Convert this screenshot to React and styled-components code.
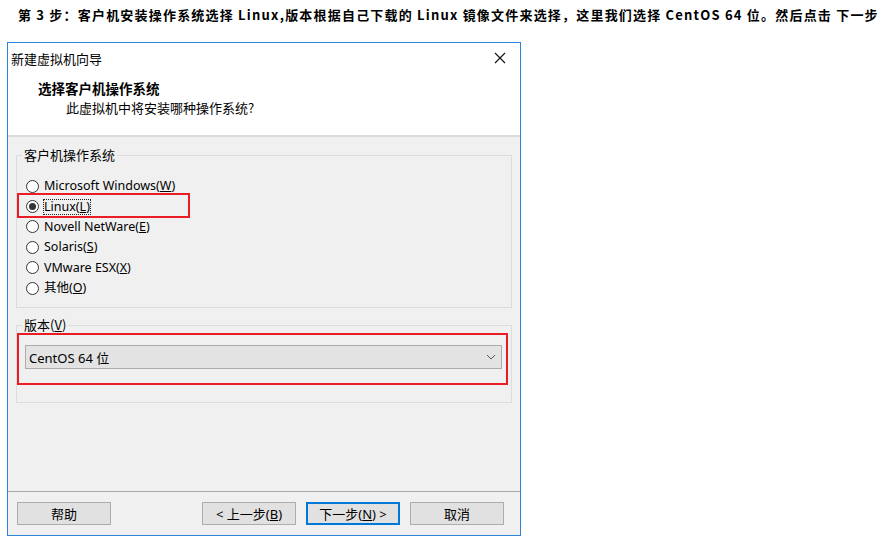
import React from "react";
import styled, { createGlobalStyle } from "styled-components";

const GlobalStyle = createGlobalStyle`
  html, body {
    margin: 0;
    padding: 0;
    background: #ffffff;
  }
  body {
    font-family: "Noto Sans", "Noto Sans CJK SC", sans-serif;
    color: #000;
  }
`;

const Page = styled.div`
  width: 890px;
  height: 550px;
  overflow: hidden;
`;

const Caption = styled.p`
  margin: 0;
  padding: 6px 0 0 18px;
  font-family: "Noto Sans CJK SC", sans-serif;
  font-weight: bold;
  font-size: 13px;
  line-height: 18px;
  letter-spacing: 1.2px;
  white-space: nowrap;
`;

const Window = styled.div`
  margin: 18px 0 0 7px;
  width: 514px;
  height: 494px;
  box-sizing: border-box;
  border: 1px solid #2b86d9;
  background: #f0f0f0;
  display: flex;
  flex-direction: column;
  font-family: "Noto Sans", "Noto Sans CJK SC", sans-serif;
  font-size: 12.5px;
`;

const Header = styled.div`
  background: #fff;
  border-bottom: 2px solid #dadada;
  padding-bottom: 17px;
`;

const TitleBar = styled.div`
  height: 30px;
  display: flex;
  align-items: center;
  justify-content: space-between;
  padding: 0 14px 0 3px;
  margin-bottom: 5px;
  font-family: "Noto Sans CJK SC", sans-serif;
  font-size: 13px;
`;

const Heading = styled.div`
  padding-left: 30px;
  font-family: "Noto Sans CJK SC", sans-serif;
  font-weight: bold;
  font-size: 13.5px;
  line-height: 20px;
`;

const Subtitle = styled.div`
  padding-left: 58px;
  font-family: "Noto Sans CJK SC", sans-serif;
  font-size: 13px;
  line-height: 20px;
`;

const Body = styled.div`
  flex: 1;
  padding: 9px 8px 0 8px;
  display: flex;
  flex-direction: column;
  gap: 10px;
`;

const Group = styled.fieldset`
  margin: 0;
  border: 1px solid #dcdcdc;
  padding: 0 0 ${(p) => p.$bottom}px 0;
  min-width: 0;
`;

const Legend = styled.legend`
  margin-left: 5px;
  padding: 0 2px;
  font-size: 13px;
  line-height: ${(p) => p.$lh || 18}px;
  font-family: "Noto Sans CJK SC", sans-serif;
`;

const RadioList = styled.div`
  padding: 12px 0 0 9px;
`;

const RadioRow = styled.div`
  position: relative;
  height: 20.4px;
  display: flex;
  align-items: center;
  gap: 4px;

  ${(p) =>
    p.$marked &&
    `
    &::after {
      content: "";
      position: absolute;
      left: -9px;
      top: -3px;
      width: 173px;
      height: 25px;
      box-sizing: border-box;
      border: 2px solid #ec1c24;
    }
  `}
`;

const Circle = styled.span`
  width: 13px;
  height: 13px;
  box-sizing: border-box;
  border-radius: 50%;
  border: 1px solid #333;
  background: #fff;
  display: flex;
  align-items: center;
  justify-content: center;

  &::before {
    content: "";
    width: 7px;
    height: 7px;
    border-radius: 50%;
    background: ${(p) => (p.$checked ? "#333" : "transparent")};
  }
`;

const RadioLabel = styled.span`
  line-height: 16px;
  padding: 0 1px;
  outline: ${(p) => (p.$focus ? "1px dotted #222" : "none")};
  outline-offset: -1px;
  white-space: nowrap;
`;

const Marked = styled.div`
  margin-top: 1px;
  width: 491px;
  box-sizing: border-box;
  border: 2px solid #ec1c24;
  padding: 10px 4px 14px 6px;
`;

const Select = styled.div`
  height: 24px;
  box-sizing: border-box;
  border: 1px solid #adadad;
  background: #e3e3e3;
  display: flex;
  align-items: center;
  justify-content: space-between;
  padding: 0 5px 0 3px;
  font-size: 13px;
`;

const Footer = styled.div`
  border-top: 1px solid #a9a9a9;
  padding: 10px 16px 10px 9px;
  display: flex;
  align-items: center;
`;

const Button = styled.div`
  width: 94px;
  height: 23px;
  box-sizing: border-box;
  border: 1px solid ${(p) => (p.$default ? "#0078d7" : "#adadad")};
  box-shadow: ${(p) => (p.$default ? "inset 0 0 0 1px #0078d7" : "none")};
  background: #e1e1e1;
  display: flex;
  align-items: center;
  justify-content: center;
  font-size: 13px;
  font-family: "Noto Sans", "Noto Sans CJK SC", sans-serif;
  white-space: nowrap;
  margin-left: ${(p) => p.$ml || 0}px;
`;

const Spacer = styled.div`
  flex: 1;
`;

const CloseIcon = () => (
  <svg width="12" height="12" viewBox="0 0 12 12">
    <path d="M1 1 L11 11 M11 1 L1 11" stroke="#111" strokeWidth="1.1" />
  </svg>
);

const Chevron = () => (
  <svg width="10" height="6" viewBox="0 0 10 6">
    <path d="M1 1 L5 5 L9 1" fill="none" stroke="#555" strokeWidth="1" />
  </svg>
);

const options = [
  { text: "Microsoft Windows(", key: "W" },
  { text: "Linux(", key: "L", checked: true },
  { text: "Novell NetWare(", key: "E" },
  { text: "Solaris(", key: "S" },
  { text: "VMware ESX(", key: "X" },
  { text: "其他(", key: "O" },
];

export default function App() {
  return (
    <Page>
      <GlobalStyle />
      <Caption>
        第 3 步：客户机安装操作系统选择 Linux,版本根据自己下载的 Linux
        镜像文件来选择，这里我们选择 CentOS 64 位。然后点击 下一步
      </Caption>
      <Window>
        <Header>
          <TitleBar>
            <span>新建虚拟机向导</span>
            <CloseIcon />
          </TitleBar>
          <Heading>选择客户机操作系统</Heading>
          <Subtitle>此虚拟机中将安装哪种操作系统?</Subtitle>
        </Header>
        <Body>
          <Group $bottom={9}>
            <Legend>客户机操作系统</Legend>
            <RadioList>
              {options.map((o) => (
                <RadioRow key={o.key} $marked={o.checked}>
                  <Circle $checked={o.checked} />
                  <RadioLabel $focus={o.checked}>
                    {o.text}
                    <u>{o.key}</u>)
                  </RadioLabel>
                </RadioRow>
              ))}
            </RadioList>
          </Group>
          <Group $bottom={17}>
            <Legend $lh={14}>
              版本(<u>V</u>)
            </Legend>
            <Marked>
              <Select>
                <span>CentOS 64 位</span>
                <Chevron />
              </Select>
            </Marked>
          </Group>
        </Body>
        <Footer>
          <Button>帮助</Button>
          <Spacer />
          <Button>
            &lt; 上一步(<u>B</u>)
          </Button>
          <Button $default $ml={10}>
            下一步(<u>N</u>) &gt;
          </Button>
          <Button $ml={10}>取消</Button>
        </Footer>
      </Window>
    </Page>
  );
}
